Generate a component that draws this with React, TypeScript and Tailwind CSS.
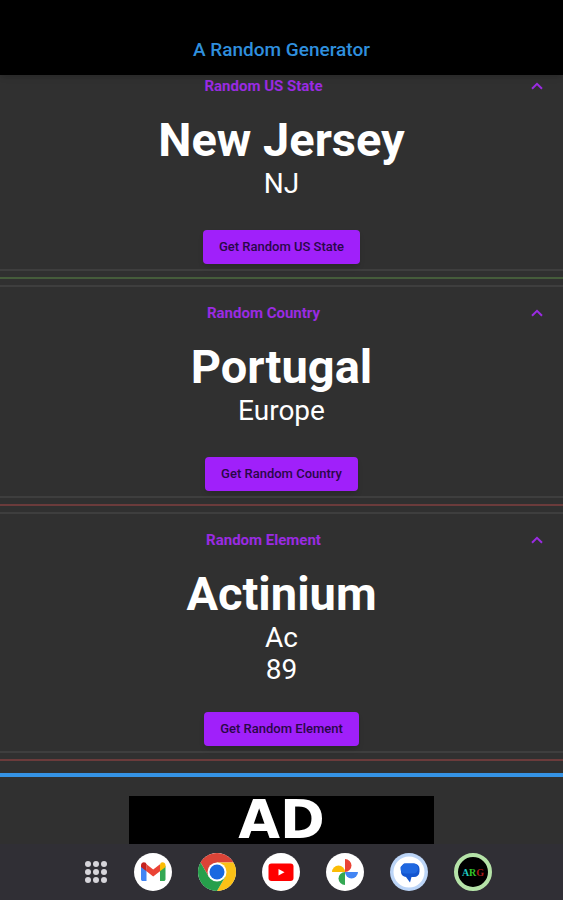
import React, { useState } from 'react';

const sections = [
  {
    label: 'US State',
    title: 'New Jersey',
    details: ['NJ'],
    spacing: 'mb-[30px]',
    rule: 'bg-[#455c3b]',
  },
  {
    label: 'Country',
    title: 'Portugal',
    details: ['Europe'],
    spacing: 'mb-[30px]',
    rule: 'bg-[#6b3b3b]',
  },
  {
    label: 'Element',
    title: 'Actinium',
    details: ['Ac', '89'],
    spacing: 'mb-[26px]',
    rule: 'bg-[#6b3b3b]',
  },
];

type Section = (typeof sections)[number];

function RandomSection({ section }: { section: Section }) {
  const [open, setOpen] = useState(true);

  return (
    <section className="border-y-2 border-[#3e3e3e]">
      <button
        type="button"
        aria-expanded={open}
        onClick={() => setOpen(!open)}
        className="flex h-[52px] w-full items-center pr-5 pl-2 text-[15px] font-bold text-[#9a2be2]"
      >
        {/* Chevron column sits beside the centred label */}
        <span className="flex-1 pr-3 text-center">Random {section.label}</span>
        <svg
          viewBox="0 0 12 8"
          className={`h-2 w-3 ${open ? '' : 'rotate-180'}`}
          fill="none"
          stroke="currentColor"
          strokeWidth="2"
        >
          <path d="M1 6.8 6 1.8l5 5" />
        </svg>
      </button>

      {open && (
        <div className="flex flex-col items-center pb-[5px] text-center text-white">
          <h2 className="text-[47px] leading-[56px] font-bold">{section.title}</h2>
          <div className={section.spacing}>
            {section.details.map((detail) => (
              <p key={detail} className="text-[28px] leading-8">
                {detail}
              </p>
            ))}
          </div>
          <button
            type="button"
            className="h-[34px] rounded bg-[#a020fa] px-4 text-[13px] font-medium text-[#2a0848] shadow-md"
          >
            Get Random {section.label}
          </button>
        </div>
      )}
    </section>
  );
}

function AppsIcon() {
  return (
    <svg viewBox="0 0 24 24" className="size-6" fill="#d6d5da">
      {[4, 12, 20].map((y) =>
        [4, 12, 20].map((x) => <circle key={`${x}-${y}`} cx={x} cy={y} r="3" />)
      )}
    </svg>
  );
}

function GmailIcon() {
  return (
    <svg viewBox="0 0 38 38" className="size-[38px]">
      <circle cx="19" cy="19" r="19" fill="#fff" />
      <path d="M7 13v13.200c0 1 .8 1.800 1.800 1.800h3.700V16.500z" fill="#4285f4" />
      <path d="M26 16.500V28h3.700c1 0 1.800-.8 1.800-1.800V13z" fill="#34a853" />
      <path d="M26 11.500v6.700l5.500-4.200v-1.800c0-2.500-2.800-3.900-4.700-2.400z" fill="#fbbc04" />
      <path d="M12.500 18.200v-7l6.700 5.200 6.800-5.200v7l-6.800 5.300z" fill="#ea4335" />
      <path d="M7 12.200V14l5.500 4.200v-7l-.8-1.400C9.800 8.300 7 9.700 7 12.200z" fill="#c5221f" />
    </svg>
  );
}

function ChromeIcon() {
  return (
    <svg viewBox="0 0 48 48" className="size-[38px]">
      <circle cx="24" cy="24" r="24" fill="#fff" />
      <path d="M24 12h20.780A24 24 0 0 0 3.220 12l10.390 18z" fill="#db4437" />
      <path d="M34.390 30 24 48A24 24 0 0 0 44.780 12H24z" fill="#fbc116" />
      <path d="M13.610 30 3.220 12A24 24 0 0 0 24 48l10.390-18z" fill="#269f4b" />
      <circle cx="24" cy="24" r="12" fill="#fff" />
      <circle cx="24" cy="24" r="9.500" fill="#1a69e0" />
    </svg>
  );
}

function YoutubeIcon() {
  return (
    <svg viewBox="0 0 38 38" className="size-[38px]">
      <circle cx="19" cy="19" r="19" fill="#fff" />
      <rect x="6.500" y="10.500" width="25" height="17.500" rx="3" fill="#f00" />
      <path d="M16.500 16v6.500l6-3.250z" fill="#fff" />
    </svg>
  );
}

function PhotosIcon() {
  return (
    <svg viewBox="0 0 38 38" className="size-[38px]">
      <circle cx="19" cy="19" r="19" fill="#fff" />
      <path d="M19 6a6.500 6.500 0 0 1 0 13z" fill="#ea4335" />
      <path d="M32 19a6.500 6.500 0 0 1-13 0z" fill="#4285f4" />
      <path d="M19 32a6.500 6.500 0 0 1 0-13z" fill="#34a853" />
      <path d="M6 19a6.500 6.500 0 0 1 13 0z" fill="#fbbc04" />
    </svg>
  );
}

function MessagesIcon() {
  return (
    <svg viewBox="0 0 38 38" className="size-[38px]">
      <circle cx="19" cy="19" r="19" fill="#bcd5f7" />
      <circle cx="19" cy="19" r="15.500" fill="#fff" />
      <path
        d="M16 10.500h8a5.500 5.500 0 0 1 5.500 5.500v2.500A5.500 5.500 0 0 1 24 24h-2.500l-1.500 5.500-4-5.500a5 5 0 0 1-5-5v-3.500a5 5 0 0 1 5-5z"
        fill="#1556cf"
      />
      <path
        d="M14 10.500h9.500A4.500 4.500 0 0 1 28 15v1a4.500 4.500 0 0 1-4.500 4.500H15a4.500 4.500 0 0 1-4.500-4.500v-2z"
        fill="#2068e0"
      />
    </svg>
  );
}

function GeneratorIcon() {
  return (
    <span className="flex size-[38px] items-center justify-center rounded-full border-4 border-[#b5e3a8] bg-black font-['Liberation_Serif',serif] text-[10px] font-bold">
      <span className="text-[#1fc9c4]">A</span>
      <span className="text-[#35c728]">R</span>
      <span className="text-[#a81e1e]">G</span>
    </span>
  );
}

const dockApps = [
  { name: 'All apps', Icon: AppsIcon },
  { name: 'Gmail', Icon: GmailIcon },
  { name: 'Chrome', Icon: ChromeIcon },
  { name: 'YouTube', Icon: YoutubeIcon },
  { name: 'Photos', Icon: PhotosIcon },
  { name: 'Messages', Icon: MessagesIcon },
  { name: 'A Random Generator', Icon: GeneratorIcon },
];

export default function App() {
  return (
    <div className="flex min-h-screen flex-col bg-[#303030] font-['Roboto',sans-serif]">
      <header className="sticky top-0 z-10 flex h-[75px] items-end justify-center bg-black pb-3 shadow-md">
        <h1 className="text-[19px] leading-[26px] font-medium text-[#2f8fdd]">A Random Generator</h1>
      </header>

      {/* The list is scrolled a little way under the app bar */}
      <main className="-mt-[17px] flex-1 pb-3">
        {sections.map((section, idx) => (
          <React.Fragment key={section.label}>
            {idx > 0 && <div className="h-1.5" />}
            <RandomSection section={section} />
            <div className={`mt-1.5 h-0.5 ${section.rule}`} />
          </React.Fragment>
        ))}
      </main>

      {/* Ad banner */}
      <aside className="flex justify-center border-t-4 border-[#3593e4] pt-[19px]">
        <div className="flex h-12 w-[305px] items-center justify-center bg-black font-['DejaVu_Sans',sans-serif] text-[54px] leading-[48px] font-bold text-white">
          AD
        </div>
      </aside>

      {/* Dock */}
      <nav className="flex h-14 items-center justify-center gap-[26px] bg-[#302f35] pl-[13px]">
        {dockApps.map(({ name, Icon }) => (
          <button
            key={name}
            type="button"
            aria-label={name}
            className="flex h-[38px] min-w-6 items-center justify-center"
          >
            <Icon />
          </button>
        ))}
      </nav>
    </div>
  );
}
